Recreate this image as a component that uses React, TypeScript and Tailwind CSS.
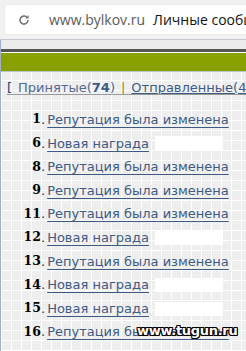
import React from "react";

const items: { n: number; text: string; white?: boolean }[] = [
  { n: 1, text: "Репутация была изменена" },
  { n: 6, text: "Новая награда", white: true },
  { n: 8, text: "Репутация была изменена" },
  { n: 9, text: "Репутация была изменена" },
  { n: 11, text: "Репутация была изменена" },
  { n: 12, text: "Новая награда", white: true },
  { n: 13, text: "Репутация была изменена" },
  { n: 14, text: "Новая награда", white: true },
  { n: 15, text: "Новая награда", white: true },
  { n: 16, text: "Репутация была изменена" },
];

export default function App() {
  return (
    <div className="relative w-[246px] h-[351px] overflow-hidden bg-[#f1f1f1]">
      {/* address bar */}
      <div className="h-[39px] pt-[5px] pl-[5px]">
        <div className="h-[29px] bg-white rounded-l-[2px] shadow-[0_0_1px_rgba(0,0,0,0.25)] flex items-center pl-[13px] whitespace-nowrap font-['Open_Sans',sans-serif] text-[14px] overflow-hidden">
          <svg width="12" height="12" viewBox="0 0 12 12" className="mr-[19px] shrink-0">
            <path d="M10 6 A4 4 0 1 1 8.8 3.2" fill="none" stroke="#777" strokeWidth="1.6" />
            <path d="M10.6 1 L10.6 4.4 L7.2 4.4 Z" fill="#777" />
          </svg>
          <span className="text-[#5a5a5a]">www.bylkov.ru</span>
          <span className="ml-[8px] text-[#111]">Личные сообщения</span>
        </div>
      </div>
      <div className="h-px bg-[#c4cad2]" />
      {/* page */}
      <div className="border-l border-[#9fb0c4] h-full">
        <div className="h-[9px] bg-[#ececec]" />
        <div className="h-[3px] bg-[#555555]" />
        <div className="h-px bg-white" />
        <div className="h-[18px] bg-[#88a000]" />
        <div className="h-px bg-[#b8c6d4]" />
        <div className="h-full bg-[#eeeeee] bg-[linear-gradient(to_right,#ffffff_1px,transparent_1px),linear-gradient(to_bottom,#ffffff_1px,transparent_1px)] bg-[size:10px_10px] bg-[position:10px_8px] font-['DejaVu_Sans',Verdana,sans-serif] text-[13px]">
          <div className="pt-[8px] pl-[6px] whitespace-nowrap h-[22px] leading-[16px] overflow-hidden">
            <span className="text-[#1c3f7a]">[</span>
            <span className="text-[#4d6a93] ml-[6px]">Принятые(</span>
            <span className="text-[#3d5a85] font-bold">74</span>
            <span className="text-[#4d6a93]">)</span>
            <span className="text-[#b07a1a] mx-[6px]">|</span>
            <span className="text-[#3d5a85] underline">Отправленные(46)</span>
          </div>
          <div className="ml-[6px] h-px bg-[#9a9a9a]" />
          <div className="pt-[13px] flex flex-col">
            {items.map((it) => (
              <div key={it.n} className="flex items-center h-[23.6px] whitespace-nowrap">
                <div className="w-[40px] text-right font-bold text-black font-['DejaVu_Serif',serif] text-[12.5px]">{it.n}</div>
                <span className="text-[#333]">.</span>
                <span className="ml-[2px] text-[#3d5a85] underline underline-offset-[3px] decoration-[#3d5a85]">{it.text}</span>
                {it.white && <div className="ml-[6px] w-[68px] h-[14px] bg-white" />}
              </div>
            ))}
          </div>
        </div>
      </div>
      <div className="absolute left-[137px] top-[322px] leading-[18px] font-['DejaVu_Sans',Verdana,sans-serif] font-bold text-[13px] text-white tracking-[-0.3px] [text-shadow:1px_1px_0_#000,-1px_-1px_0_#000,1px_-1px_0_#000,-1px_1px_0_#000,0_1px_0_#000,0_-1px_0_#000,1px_0_0_#000,-1px_0_0_#000]">
        www.tugun.ru
      </div>
    </div>
  );
}
